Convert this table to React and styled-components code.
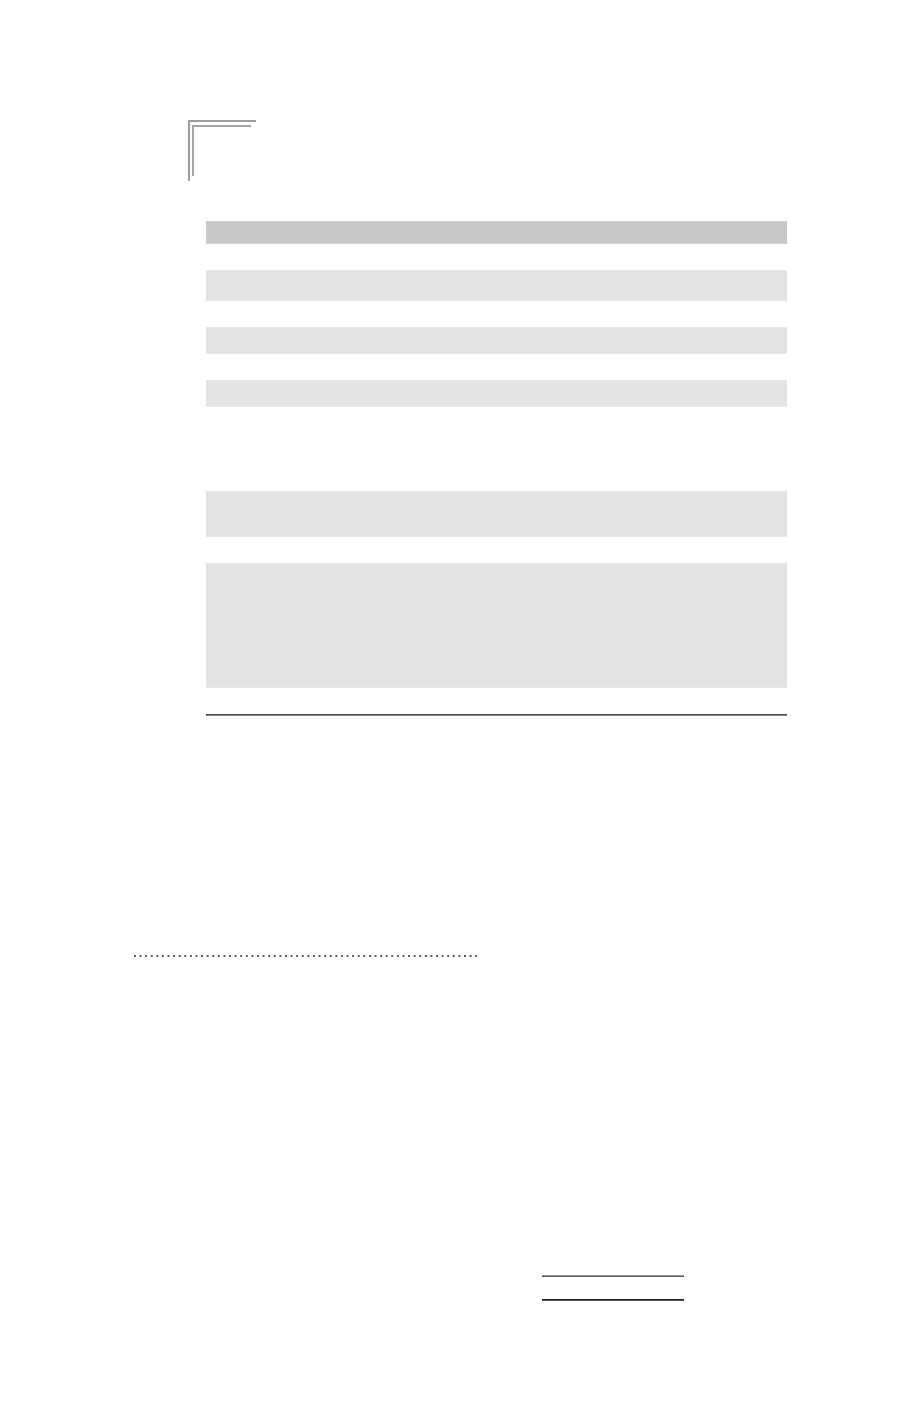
import React from 'react'
import styled, { createGlobalStyle } from 'styled-components'

const GlobalStyle = createGlobalStyle`
  html, body {
    margin: 0;
    padding: 0;
    background: #fff;
    font-family: 'Liberation Sans', Arial, sans-serif;
  }
`

const Page = styled.div`
  width: 920px;
  min-height: 1406px;
  box-sizing: border-box;
  padding-top: 120px;
  display: flex;
  flex-direction: column;
`

const Corner = styled.div`
  margin-left: 188px;
  width: 68px;
  height: 61px;
  box-sizing: border-box;
  border-top: 2px solid #9c9c9c;
  border-left: 2px solid #9c9c9c;
  padding: 3px 0 0 2px;
`

const InnerCorner = styled.div`
  width: 57px;
  height: 49px;
  border-top: 2px solid #a4a4a4;
  border-left: 2px solid #a4a4a4;
`

const Form = styled.div`
  margin: 40px 0 0 206px;
  width: 581px;
  display: flex;
  flex-direction: column;
`

const Bar = styled.div`
  height: ${p => p.$h}px;
  margin-top: ${p => p.$gap || 0}px;
  box-sizing: border-box;
  background: ${p => (p.$dark ? '#c8c8c8' : '#e3e3e3')};
  border-top: 1px solid ${p => (p.$dark ? '#d2d2d2' : '#e8e8e8')};
  border-bottom: 1px solid ${p => (p.$dark ? '#d2d2d2' : '#e8e8e8')};
`

const Rule = styled.div`
  margin-top: 26px;
  height: 0;
  border-top: 1px solid #4a4843;
  border-bottom: 1px solid #8a8884;
`

const Dotted = styled.div`
  margin: 239px 0 0 134px;
  width: 343px;
  height: 2px;
  background-image: linear-gradient(to right, #555 0, #555 1.6px, transparent 1.6px);
  background-size: 5.6px 2px;
  background-repeat: repeat-x;
`

const Signature = styled.div`
  display: flex;
  flex-direction: column;
  gap: 22px;
  margin: 318px 0 0 542px;
  width: 142px;
`

const SignLine = styled.div`
  height: 0;
  border-top: 1px solid ${p => p.$top};
  border-bottom: 1px solid ${p => p.$bottom};
`

const App = () => {
  return (
    <>
      <GlobalStyle />
      <Page>
        <Corner>
          <InnerCorner />
        </Corner>

        <Form>
          <Bar $dark $h={23} />
          <Bar $h={31} $gap={26} />
          <Bar $h={27} $gap={26} />
          <Bar $h={27} $gap={26} />
          <Bar $h={46} $gap={84} />
          <Bar $h={125} $gap={26} />
          <Rule />
        </Form>

        <Dotted />

        <Signature>
          <SignLine $top="#9a9a9a" $bottom="#5a5a5a" />
          <SignLine $top="#222" $bottom="#555" />
        </Signature>
      </Page>
    </>
  )
}

export default App
